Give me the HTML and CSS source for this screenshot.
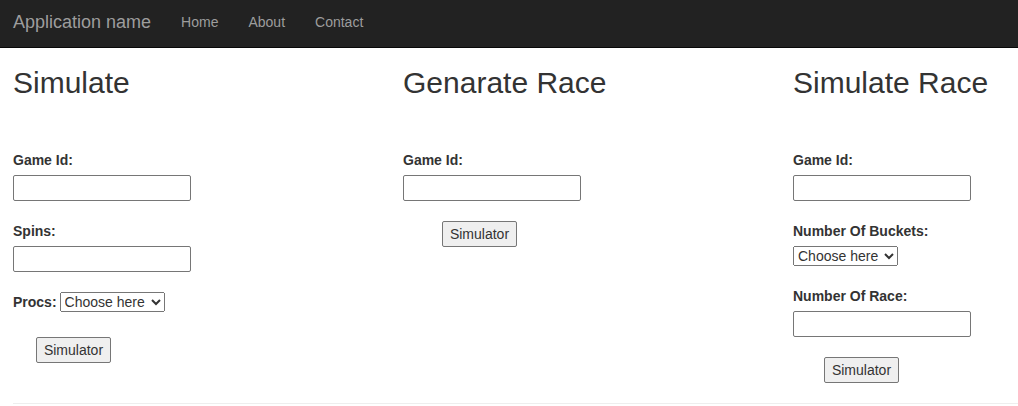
FILE: index.html
```html
<!DOCTYPE html>
<html>
<head>
<meta charset="utf-8">
<title>Application name</title>
<link rel="stylesheet" href="styles.css">
</head>
<body>
<nav class="navbar">
  <a class="brand" href="#">Application name</a>
  <a class="nav-link" href="#">Home</a>
  <a class="nav-link" href="#">About</a>
  <a class="nav-link" href="#">Contact</a>
</nav>
<main class="page">
  <div class="row">
    <section class="col">
      <h2>Simulate</h2>
      <div class="field">
        <label class="lbl">Game Id:</label>
        <input class="txt" type="text">
      </div>
      <div class="field">
        <label class="lbl">Spins:</label>
        <input class="txt" type="text">
      </div>
      <div class="inline-field">
        <label class="lbl-inline">Procs:</label>
        <select class="sel"><option>Choose here</option></select>
      </div>
      <button class="btn btn-a">Simulator</button>
    </section>
    <section class="col">
      <h2>Genarate Race</h2>
      <div class="field">
        <label class="lbl">Game Id:</label>
        <input class="txt" type="text">
      </div>
      <button class="btn btn-b">Simulator</button>
    </section>
    <section class="col col-last">
      <h2>Simulate Race</h2>
      <div class="field">
        <label class="lbl">Game Id:</label>
        <input class="txt" type="text">
      </div>
      <div class="field">
        <label class="lbl">Number Of Buckets:</label>
        <select class="sel"><option>Choose here</option></select>
      </div>
      <div class="field">
        <label class="lbl">Number Of Race:</label>
        <input class="txt" type="text">
      </div>
      <button class="btn btn-c">Simulator</button>
    </section>
  </div>
  <hr class="rule">
</main>
</body>
</html>
```
FILE: styles.css
```css
html, body {
  margin: 0;
  padding: 0;
  overflow: hidden;
}
body {
  font-family: "Liberation Sans", Arial, sans-serif;
  font-size: 14px;
  line-height: 20px;
  color: #333;
  background: #fff;
}
.navbar {
  display: flex;
  align-items: center;
  height: 43px;
  padding-bottom: 4px;
  background: #222;
  border-bottom: 1px solid #080808;
  padding-left: 13px;
}
.brand {
  font-size: 18px;
  color: #9d9d9d;
  text-decoration: none;
  margin-right: 15px;
  line-height: 20px;
}
.nav-link {
  color: #9d9d9d;
  text-decoration: none;
  padding: 0 15px;
  line-height: 20px;
}
.page {
  padding-left: 13px;
}
.row {
  display: flex;
  align-items: flex-start;
}
.col {
  width: 390px;
  flex: none;
  display: flex;
  flex-direction: column;
  align-items: flex-start;
}
.col-last {
  flex: 1;
  width: auto;
  min-width: 0;
}
h2 {
  font-size: 30px;
  font-weight: 500;
  line-height: 33px;
  margin: 18px 0 51px;
  white-space: nowrap;
}
.field {
  display: flex;
  flex-direction: column;
  align-items: flex-start;
  margin-bottom: 20px;
}
.lbl {
  font-weight: bold;
  line-height: 20px;
  margin-bottom: 5px;
}
.txt {
  box-sizing: border-box;
  width: 178px;
  height: 26px;
  border: 1px solid #767676;
  border-radius: 2px;
  padding: 1px 2px;
  font: inherit;
  margin: 0;
}
.sel {
  box-sizing: border-box;
  width: 105px;
  height: 20px;
  font-family: inherit;
  font-size: 14px;
  color: #333;
  margin: 0;
}
.inline-field {
  display: flex;
  align-items: center;
  height: 20px;
  margin-bottom: 25px;
}
.lbl-inline {
  font-weight: bold;
  margin-right: 3px;
}
.btn {
  box-sizing: border-box;
  width: 75px;
  height: 26px;
  padding: 0 6px;
  font-family: inherit;
  font-size: 14px;
  color: #333;
  background: #efefef;
  border: 1px solid #767676;
  border-radius: 2px;
  margin: 0;
}
.btn-a { margin-left: 23px; }
.btn-b { margin-left: 39px; }
.btn-c { margin-left: 31px; }
.rule {
  border: 0;
  border-top: 1px solid #eee;
  margin: 20px 0 0;
}
```
